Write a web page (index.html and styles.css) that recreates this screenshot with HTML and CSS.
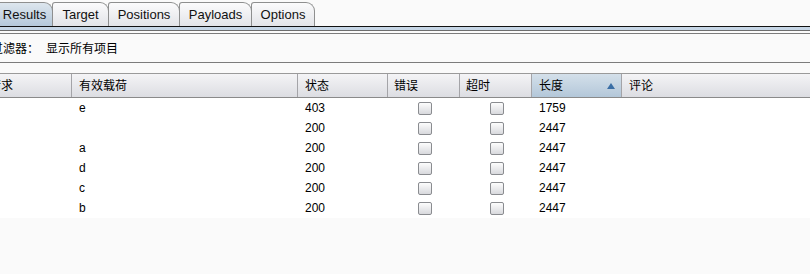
FILE: index.html
```html
<!DOCTYPE html>
<html>
<head>
	<meta charset="utf-8">
	<title>Intruder Results</title>
	<link rel="stylesheet" href="styles.css">
</head>
<body>
	<div class="tabs">
		<div class="tab active t-results">Results</div>
		<div class="tab t-target">Target</div>
		<div class="tab t-positions">Positions</div>
		<div class="tab t-payloads">Payloads</div>
		<div class="tab t-options">Options</div>
	</div>
	<div class="tabline"></div>

	<div class="filter"><span class="flabel">过滤器：</span>显示所有项目</div>

	<div class="grid">
		<div class="row head">
			<div class="c c1">请求</div>
			<div class="c c2">有效载荷</div>
			<div class="c c3">状态</div>
			<div class="c c4">错误</div>
			<div class="c c5">超时</div>
			<div class="c c6 sorted">长度<span class="arrow"></span></div>
			<div class="c c7">评论</div>
		</div>
		<div class="row">
			<div class="c c1"></div><div class="c c2">e</div><div class="c c3">403</div>
			<div class="c c4"><span class="cb"></span></div><div class="c c5"><span class="cb"></span></div>
			<div class="c c6">1759</div><div class="c c7"></div>
		</div>
		<div class="row">
			<div class="c c1"></div><div class="c c2"></div><div class="c c3">200</div>
			<div class="c c4"><span class="cb"></span></div><div class="c c5"><span class="cb"></span></div>
			<div class="c c6">2447</div><div class="c c7"></div>
		</div>
		<div class="row">
			<div class="c c1"></div><div class="c c2">a</div><div class="c c3">200</div>
			<div class="c c4"><span class="cb"></span></div><div class="c c5"><span class="cb"></span></div>
			<div class="c c6">2447</div><div class="c c7"></div>
		</div>
		<div class="row">
			<div class="c c1"></div><div class="c c2">d</div><div class="c c3">200</div>
			<div class="c c4"><span class="cb"></span></div><div class="c c5"><span class="cb"></span></div>
			<div class="c c6">2447</div><div class="c c7"></div>
		</div>
		<div class="row">
			<div class="c c1"></div><div class="c c2">c</div><div class="c c3">200</div>
			<div class="c c4"><span class="cb"></span></div><div class="c c5"><span class="cb"></span></div>
			<div class="c c6">2447</div><div class="c c7"></div>
		</div>
		<div class="row">
			<div class="c c1"></div><div class="c c2">b</div><div class="c c3">200</div>
			<div class="c c4"><span class="cb"></span></div><div class="c c5"><span class="cb"></span></div>
			<div class="c c6">2447</div><div class="c c7"></div>
		</div>
	</div>
</body>
</html>
```
FILE: styles.css
```css
*{
	margin: 0;
	padding: 0;
	box-sizing: border-box;
}
html,body{
	background: #fafafa;
	width: 810px;
	height: 274px;
	overflow: hidden;
}
body{
	font-family: "Liberation Sans", "Noto Sans CJK SC", sans-serif;
	font-size: 12px;
	color: #000;
}

/* tab strip */
.tabs{
	display: flex;
	height: 26px;
	padding-top: 2px;
	margin-left: -8px;
}
.tab{
	height: 24px;
	line-height: 23px;
	font-size: 13px;
	text-align: center;
	border: 1px solid #8e8f8f;
	border-bottom: none;
	border-radius: 3px 9px 0 0;
	background: linear-gradient(#fbfbfc, #e3e4e8);
	color: #111;
	margin-right: -1px;
}
.tab.active{
	background: linear-gradient(#dde6ee, #b5c8da);
	padding-left: 4px;
}
.t-results{ width: 61px; }
.t-target{ width: 57px; }
.t-positions{ width: 72px; }
.t-payloads{ width: 73px; }
.t-options{ width: 64px; }
.tabline{
	height: 5px;
	border-top: 1px solid #111;
	border-bottom: 1px solid #6e6e6e;
	background: #c6d6e6;
}

.filter{
	margin-top: 2px;
	height: 30px;
	border-top: 1px solid #7c7c7c;
	border-bottom: 1px solid #7c7c7c;
	line-height: 28px;
	margin-left: -9px;
	margin-right: -10px;
	font-family: "Noto Sans CJK SC", sans-serif;
	font-size: 12px;
}
.flabel{
	margin-right: 7px;
}

/* results table */
.grid{
	margin-top: 10px;
	margin-left: -18px;
	background: #fff;
	width: 830px;
}
.row{
	display: flex;
	height: 20px;
	line-height: 20px;
}
.c{
	padding-left: 7px;
	white-space: nowrap;
	overflow: hidden;
}
.c1{ width: 90px; }
.c2{ width: 226px; }
.c3{ width: 90px; }
.c4{ width: 72px; }
.c5{ width: 72px; }
.c6{ width: 90px; }
.c7{ flex: 1; }
.c4,.c5{
	padding-left: 0;
	display: flex;
	align-items: center;
	justify-content: center;
}
.head{
	height: 25px;
	line-height: 22px;
	background: linear-gradient(#f4f4f6, #dcdde2);
	border-top: 1px solid #9a9a9a;
	border-bottom: 1px solid #8a8a8a;
	font-family: "Noto Sans CJK SC", sans-serif;
}
.head .c{
	border-right: 1px solid #a4a4a8;
}
.head .c4,.head .c5{
	display: block;
	padding-left: 6px;
}
.head .c7{ border-right: none; }
.head .sorted{
	position: relative;
	background: linear-gradient(#d4e0ea, #b3c7d9);
}
.arrow{
	position: absolute;
	right: 6px;
	top: 9px;
	width: 0;
	height: 0;
	border-left: 4px solid transparent;
	border-right: 4px solid transparent;
	border-bottom: 6px solid #3a6ea5;
}
.cb{
	display: block;
	width: 14px;
	height: 13px;
	border: 1px solid #8a8c90;
	border-radius: 2px;
	background: linear-gradient(#fdfdfd, #d8d9dd);
	margin-left: 2px;
}
```
